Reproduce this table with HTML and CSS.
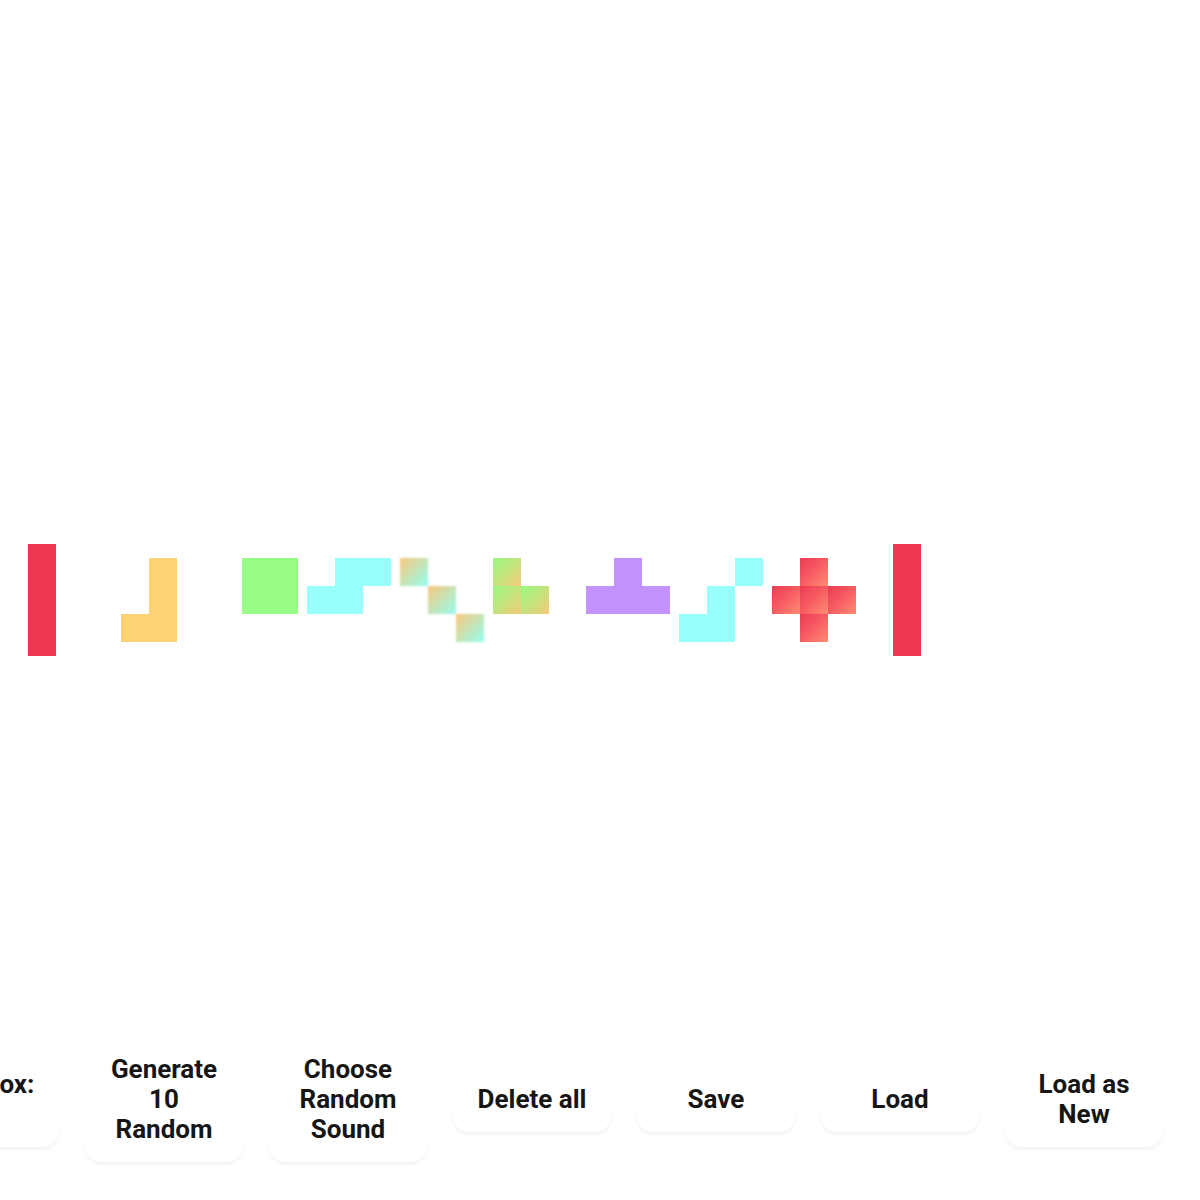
FILE: index.html
```html
<!DOCTYPE html>
<html>
<head>
<meta charset="utf-8">
<link rel="stylesheet" href="styles.css">
</head>
<body>
<main class="play">
  <div class="pieces">
    <div class="piece w2 h4"><span class="c red" style="grid-area:1/2/5/3"></span></div>
    <div class="piece w4 h3">
      <span class="c yellow" style="grid-area:1/4"></span>
      <span class="c yellow" style="grid-area:2/4"></span>
      <span class="c yellow" style="grid-area:3/3"></span>
      <span class="c yellow" style="grid-area:3/4"></span>
    </div>
    <div class="piece w4 h3">
      <span class="c green" style="grid-area:1/3"></span>
      <span class="c green" style="grid-area:1/4"></span>
      <span class="c green" style="grid-area:2/3"></span>
      <span class="c green" style="grid-area:2/4"></span>
    </div>
    <div class="piece w3 h3">
      <span class="c cyan" style="grid-area:1/2"></span>
      <span class="c cyan" style="grid-area:1/3"></span>
      <span class="c cyan" style="grid-area:2/1"></span>
      <span class="c cyan" style="grid-area:2/2"></span>
    </div>
    <div class="piece w3 h3 soft">
      <span class="c sunset" style="grid-area:1/1"></span>
      <span class="c sunset" style="grid-area:2/2"></span>
      <span class="c sunset" style="grid-area:3/3"></span>
    </div>
    <div class="piece w3 h3">
      <span class="c lime" style="grid-area:1/1"></span>
      <span class="c lime" style="grid-area:2/1"></span>
      <span class="c lime" style="grid-area:2/2"></span>
    </div>
    <div class="piece w3 h3">
      <span class="c purple" style="grid-area:1/2"></span>
      <span class="c purple" style="grid-area:2/1"></span>
      <span class="c purple" style="grid-area:2/2"></span>
      <span class="c purple" style="grid-area:2/3"></span>
    </div>
    <div class="piece w3 h3">
      <span class="c cyan" style="grid-area:1/3"></span>
      <span class="c cyan" style="grid-area:2/2"></span>
      <span class="c cyan" style="grid-area:3/1"></span>
      <span class="c cyan" style="grid-area:3/2"></span>
    </div>
    <div class="piece w3 h3">
      <span class="c coral" style="grid-area:1/2"></span>
      <span class="c coral" style="grid-area:2/1"></span>
      <span class="c coral" style="grid-area:2/2"></span>
      <span class="c coral" style="grid-area:2/3"></span>
      <span class="c coral" style="grid-area:3/2"></span>
    </div>
    <div class="piece w2 h4"><span class="c red" style="grid-area:1/2/5/3"></span></div>
  </div>
</main>
<footer class="controls">
  <label class="btn">Sandbox:<br><input type="checkbox" class="check"></label>
  <button class="btn">Generate 10 Random</button>
  <button class="btn">Choose Random Sound</button>
  <button class="btn">Delete all</button>
  <button class="btn">Save</button>
  <button class="btn">Load</button>
  <button class="btn">Load as New</button>
</footer>
</body>
</html>
```
FILE: styles.css
```css
html, body {
  margin: 0;
  padding: 0;
  background: #ffffff;
  overflow: hidden;
}

body {
  width: 1200px;
  height: 1200px;
  font-family: Roboto, "Liberation Sans", sans-serif;
}

.play {
  padding-top: 544px;
}

.pieces {
  display: flex;
  align-items: center;
  gap: 9px;
  height: 112px;
}

.piece {
  display: grid;
  grid-auto-columns: 28px;
  grid-auto-rows: 28px;
  flex-shrink: 0;
}

.w2 { grid-template-columns: repeat(2, 28px); }
.w3 { grid-template-columns: repeat(3, 28px); }
.w4 { grid-template-columns: repeat(4, 28px); }
.h3 { grid-template-rows: repeat(3, 28px); }
.h4 { grid-template-rows: repeat(4, 28px); }

.c { display: block; }

.red { background: #ef3753; }
.yellow { background: #fdd277; }
.green { background: #97fd85; }
.cyan { background: #99fffb; }
.purple { background: #c293fd; }
.sunset { background: linear-gradient(135deg, #f9c77c 0%, #c6e3b4 50%, #97fdf2 100%); }
.lime { background: linear-gradient(135deg, #98f880 0%, #c4e37c 50%, #f6c97a 100%); }
.coral { background: linear-gradient(135deg, #ee3a55 0%, #f65e63 50%, #ff8d72 100%); box-shadow: inset 0 0 1px rgba(200, 40, 60, 0.25); }

.soft .c { filter: blur(0.8px); }

.controls {
  width: 1064px;
  margin-top: 380px;
  display: flex;
  justify-content: center;
  align-items: center;
  gap: 24px;
}

.btn {
  flex: 0 0 160px;
  width: 160px;
  box-sizing: border-box;
  padding: 18px 20px;
  border: none;
  border-radius: 18px;
  background: #ffffff;
  box-shadow: 0 3px 3px rgba(0, 0, 0, 0.045);
  font-family: Roboto, "Liberation Sans", sans-serif;
  font-weight: 700;
  font-size: 26px;
  line-height: 30px;
  color: #161616;
  text-align: center;
}

.check {
  margin: 0;
  width: 14px;
  height: 14px;
  vertical-align: middle;
}
```
